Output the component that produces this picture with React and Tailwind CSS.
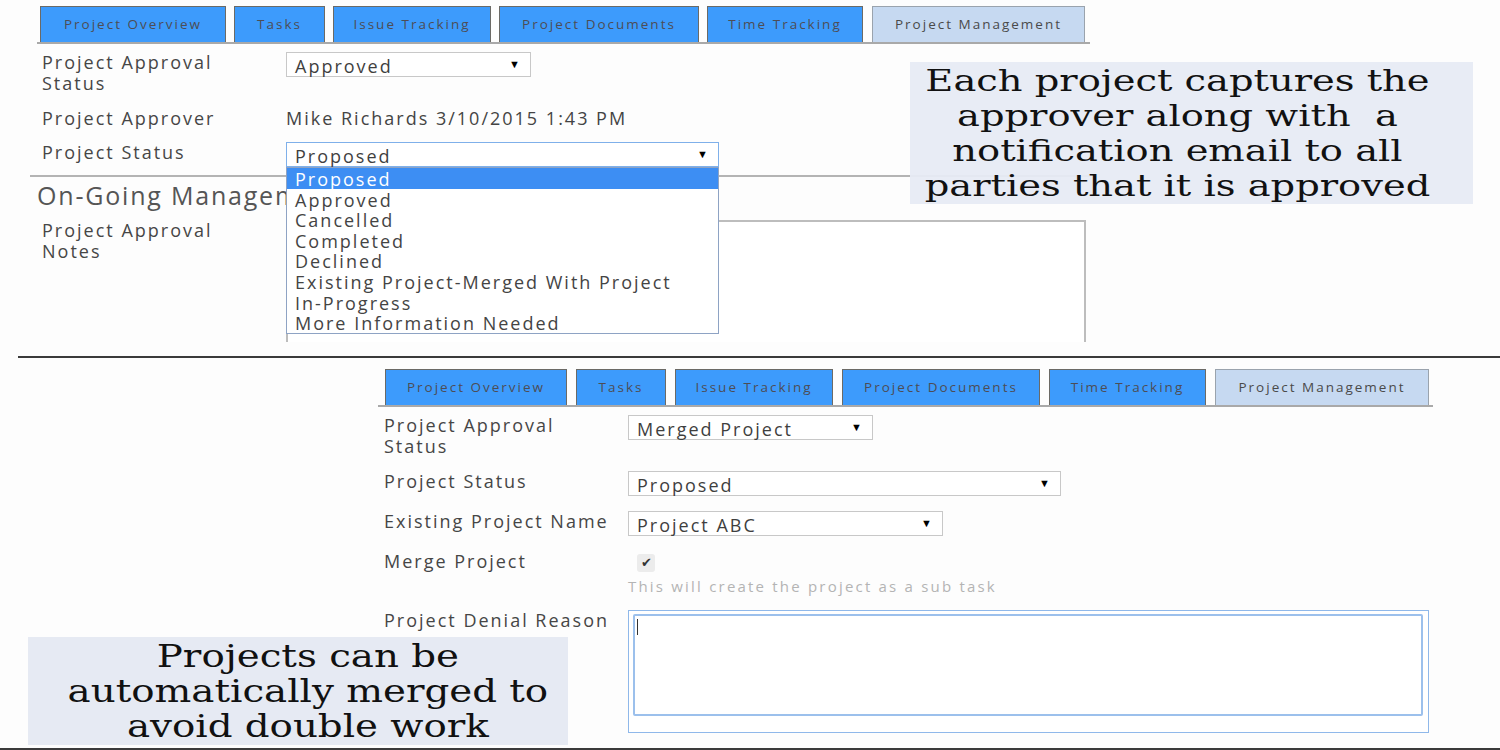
import React from 'react';

const ui = { fontFamily: '"Open Sans", "Noto Sans", sans-serif' };

const Tab = ({ label, width, active }) => (
  <div
    className={`h-[36px] flex items-center justify-center border border-b-0 text-[13.5px] tracking-[2px] ${
      active ? 'bg-[#c6d9f1] border-[#9aa3ad] text-[#4a4a4a]' : 'bg-[#3d9bfc] border-[#6b6a66] text-[#4d4d55]'
    }`}
    style={{ width }}
  >
    {label}
  </div>
);

const TabRow = ({ widths, gaps, lineWidth, offset }) => {
  const names = ['Project Overview', 'Tasks', 'Issue Tracking', 'Project Documents', 'Time Tracking', 'Project Management'];
  return (
    <div>
      <div className="flex" style={{ marginLeft: offset }}>
        {names.map((n, i) => (
          <div key={n} className="flex" style={{ marginLeft: i === 0 ? 0 : gaps[i - 1] }}>
            <Tab label={n} width={widths[i]} active={i === 5} />
          </div>
        ))}
      </div>
      <div className="h-[2px] bg-[#a9a9a9]" style={{ width: lineWidth }} />
    </div>
  );
};

const Select = ({ value, width, focused }) => (
  <div
    className={`h-[25px] flex items-center justify-between pl-[8px] pr-[10px] bg-white border text-[18px] tracking-[2px] text-[#3f3f3f] ${
      focused ? 'border-[#7fb0ea]' : 'border-[#c8c8c8]'
    }`}
    style={{ width }}
  >
    <span className="leading-none pt-[2px]">{value}</span>
    <span className="text-[11px] tracking-normal text-black">▼</span>
  </div>
);

const Label = ({ children }) => (
  <div className="w-[244px] shrink-0 text-[18px] leading-[21px] tracking-[2px] text-[#464646]">{children}</div>
);

const statusOptions = [
  'Proposed',
  'Approved',
  'Cancelled',
  'Completed',
  'Declined',
  'Existing Project-Merged With Project',
  'In-Progress',
  'More Information Needed',
];

export default function App() {
  return (
    <div className="w-[1500px] h-[750px] overflow-hidden bg-[#fdfdfd] relative" style={ui}>
      {/* upper capture */}
      <div className="h-[356px] pt-0">
        <div className="h-[342px] relative overflow-hidden">
          <div className="pt-[6px] pl-[37px]">
            <TabRow widths={[186, 91, 158, 200, 156, 213]} gaps={[8, 8, 8, 8, 9]} lineWidth={1053} offset={3} />
          </div>

          <div className="pl-[42px] pt-[8px]">
            <div className="flex items-start">
              <Label>Project Approval<br />Status</Label>
              <Select value="Approved" width={245} />
            </div>
            <div className="flex items-center mt-[14px]">
              <Label>Project Approver</Label>
              <span className="text-[18px] leading-[21px] tracking-[2px] text-[#444]">Mike Richards 3/10/2015 1:43 PM</span>
            </div>
            <div className="flex items-start mt-[13px]">
              <Label>Project Status</Label>
              <div className="relative">
                <Select value="Proposed" width={433} focused />
                <div className="absolute left-0 top-[25px] w-[433px] bg-white border border-[#8ea3c4] z-10">
                  {statusOptions.map((o, i) => (
                    <div
                      key={o}
                      className={`h-[20.6px] pl-[8px] pt-[2px] text-[18px] leading-[18.6px] tracking-[2px] whitespace-nowrap ${
                        i === 0 ? 'bg-[#3d8ef3] text-white' : 'text-[#444]'
                      }`}
                    >
                      {o}
                    </div>
                  ))}
                </div>
              </div>
            </div>
          </div>

          <div className="ml-[30px] mt-[8px] w-[1060px] h-[2px] bg-[#b4b4b4]" />
          <div className="pl-[37px] mt-[3px] text-[25px] leading-[30px] tracking-[1.8px] text-[#555] whitespace-nowrap">
            On-Going Management
          </div>

          <div className="pl-[42px] mt-[10px] flex items-start">
            <Label>Project Approval<br />Notes</Label>
            <div className="w-[800px] h-[140px] border-2 border-[#bdbdbd] bg-white" />
          </div>
        </div>
      </div>

      <div className="ml-[18px] h-[2px] bg-[#3b3b3b]" />

      {/* lower capture */}
      <div className="h-[392px] relative">
        <div className="pt-[11px] pl-[378px]">
          <TabRow widths={[182, 90, 158, 198, 157, 214]} gaps={[9, 9, 9, 9, 9]} lineWidth={1055} offset={7} />
        </div>

        <div className="pl-[384px] pt-[8px]">
          <div className="flex items-start">
            <Label>Project Approval<br />Status</Label>
            <Select value="Merged Project" width={245} />
          </div>
          <div className="flex items-start mt-[14px]">
            <Label>Project Status</Label>
            <Select value="Proposed" width={433} />
          </div>
          <div className="flex items-start mt-[15px]">
            <Label>Existing Project Name</Label>
            <Select value="Project ABC" width={315} />
          </div>
          <div className="flex items-start mt-[15px]">
            <Label>Merge Project</Label>
            <div>
              <div className="ml-[9px] mt-[3px] w-[18px] h-[18px] rounded-[3px] bg-[#ececec] flex items-center justify-center text-[13px] text-[#333]">
                ✔
              </div>
              <div className="mt-[4px] text-[15px] leading-[20px] tracking-[2.2px] text-[#b4b4b4] whitespace-nowrap">
                This will create the project as a sub task
              </div>
            </div>
          </div>
          <div className="flex items-start mt-[14px]">
            <Label>Project Denial Reason</Label>
            <div className="w-[801px] h-[123px] border border-[#8fb8ea] bg-white pt-[3px] pl-[4px] pr-[5px]">
              <div className="h-[102px] border-2 border-[#9cc0ec] rounded-[2px] relative">
                <div className="absolute left-[2px] top-[3px] w-[1px] h-[16px] bg-[#333]" />
              </div>
            </div>
          </div>
        </div>
      </div>

      <div className="absolute left-0 bottom-0 w-[1500px] h-[2px] bg-[#3b3b3b]" />

      {/* annotations */}
      <div
        className="absolute left-[910px] top-[62px] w-[563px] h-[142px] bg-[#e7ebf4]/95 flex flex-col items-center justify-center text-[30px] leading-[35px] text-[#111] z-20"
        style={{ fontFamily: '"DejaVu Serif", "Liberation Serif", serif' }}
      >
        <div className="mr-[28px] scale-x-[1.28] whitespace-nowrap text-center">
          <div>Each project captures the</div>
          <div>approver along with&nbsp; a</div>
          <div>notification email to all</div>
          <div>parties that it is approved</div>
        </div>
      </div>

      <div
        className="absolute left-[28px] top-[637px] w-[540px] h-[108px] bg-[#e6eaf3] flex flex-col items-center justify-center text-[31px] leading-[35px] text-[#111] z-20"
        style={{ fontFamily: '"DejaVu Serif Condensed", "Liberation Serif", serif', fontStretch: 'condensed' }}
      >
        <div className="ml-[20px] scale-x-[1.39] whitespace-nowrap text-center">
          <div>Projects can be</div>
          <div>automatically merged to</div>
          <div>avoid double work</div>
        </div>
      </div>
    </div>
  );
}
